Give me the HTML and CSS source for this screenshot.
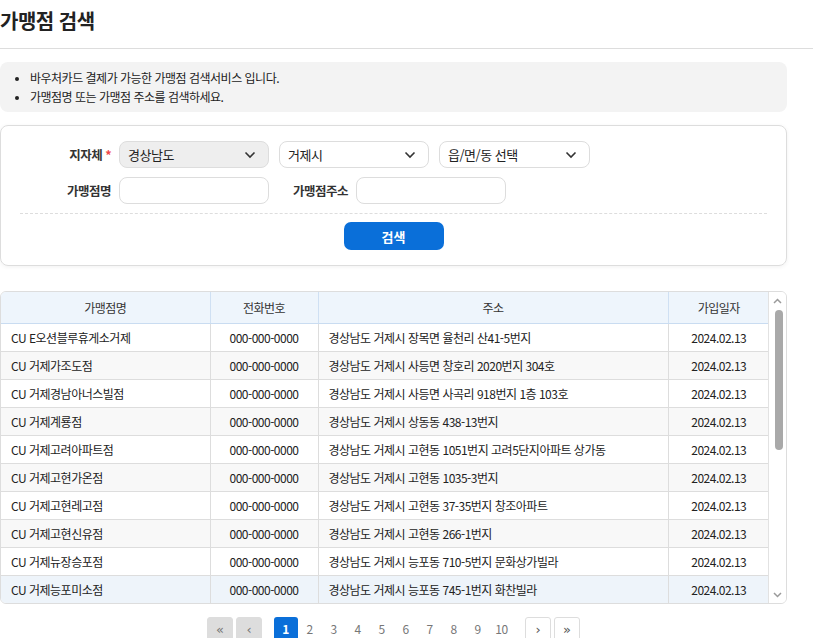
FILE: index.html
```html
<!DOCTYPE html>
<html lang="ko">
<head>
  <meta charset="UTF-8">
  <meta name="viewport" content="width=device-width, initial-scale=1.0">
  <title>가맹점 검색</title>
  <link rel="stylesheet" href="styles.css">
</head>
<body>
  <h1 class="page-title">가맹점 검색</h1>

  <div class="content">
    <ul class="info-box">
      <li>바우처카드 결제가 가능한 가맹점 검색서비스 입니다.</li>
      <li>가맹점명 또는 가맹점 주소를 검색하세요.</li>
    </ul>

    <div class="search-card">
      <div class="form-row">
        <label class="form-label">지자체<span class="required">*</span></label>
        <div class="select-box disabled">
          <span>경상남도</span>
          <svg width="12" height="8" viewBox="0 0 12 8"><path d="M1.5 1.5 6 6l4.5-4.5" fill="none" stroke="#333" stroke-width="1.6"/></svg>
        </div>
        <div class="select-box">
          <span>거제시</span>
          <svg width="12" height="8" viewBox="0 0 12 8"><path d="M1.5 1.5 6 6l4.5-4.5" fill="none" stroke="#333" stroke-width="1.6"/></svg>
        </div>
        <div class="select-box">
          <span>읍/면/동 선택</span>
          <svg width="12" height="8" viewBox="0 0 12 8"><path d="M1.5 1.5 6 6l4.5-4.5" fill="none" stroke="#333" stroke-width="1.6"/></svg>
        </div>
      </div>
      <div class="form-row">
        <label class="form-label">가맹점명</label>
        <input type="text" class="text-input">
        <label class="form-label inline">가맹점주소</label>
        <input type="text" class="text-input">
      </div>
      <div class="form-actions">
        <button class="search-button">검색</button>
      </div>
    </div>

    <div class="table-wrap">
      <div class="table-scroll">
        <table class="store-table">
          <colgroup>
            <col style="width: 209px">
            <col style="width: 108px">
            <col style="width: 350px">
            <col style="width: 101px">
          </colgroup>
          <thead>
            <tr>
              <th>가맹점명</th>
              <th>전화번호</th>
              <th>주소</th>
              <th>가입일자</th>
            </tr>
          </thead>
          <tbody id="store-list"></tbody>
        </table>
      </div>
      <div class="scrollbar">
        <span class="scroll-arrow">
          <svg width="9" height="6" viewBox="0 0 9 6"><path d="M1 5 4.5 1.5 8 5" fill="none" stroke="#9a9a9a" stroke-width="1.5"/></svg>
        </span>
        <div class="scroll-track">
          <div class="scroll-thumb"></div>
        </div>
        <span class="scroll-arrow">
          <svg width="9" height="6" viewBox="0 0 9 6"><path d="M1 1 4.5 4.5 8 1" fill="none" stroke="#9a9a9a" stroke-width="1.5"/></svg>
        </span>
      </div>
    </div>

    <div class="pagination">
      <button class="page-btn gray">&laquo;</button>
      <button class="page-btn gray">&lsaquo;</button>
      <div class="page-numbers">
        <span class="page-num active">1</span>
        <span class="page-num">2</span>
        <span class="page-num">3</span>
        <span class="page-num">4</span>
        <span class="page-num">5</span>
        <span class="page-num">6</span>
        <span class="page-num">7</span>
        <span class="page-num">8</span>
        <span class="page-num">9</span>
        <span class="page-num">10</span>
      </div>
      <button class="page-btn">&rsaquo;</button>
      <button class="page-btn">&raquo;</button>
    </div>
  </div>

  <script>
    const stores = [
      ['CU E오션블루휴게소거제', '경상남도 거제시 장목면 율천리 산41-5번지'],
      ['CU 거제가조도점', '경상남도 거제시 사등면 창호리 2020번지 304호'],
      ['CU 거제경남아너스빌점', '경상남도 거제시 사등면 사곡리 918번지 1층 103호'],
      ['CU 거제계룡점', '경상남도 거제시 상동동 438-13번지'],
      ['CU 거제고려아파트점', '경상남도 거제시 고현동 1051번지 고려5단지아파트 상가동'],
      ['CU 거제고현가온점', '경상남도 거제시 고현동 1035-3번지'],
      ['CU 거제고현레고점', '경상남도 거제시 고현동 37-35번지 창조아파트'],
      ['CU 거제고현신유점', '경상남도 거제시 고현동 266-1번지'],
      ['CU 거제뉴장승포점', '경상남도 거제시 능포동 710-5번지 문화상가빌라'],
      ['CU 거제능포미소점', '경상남도 거제시 능포동 745-1번지 화찬빌라'],
      ['CU 거제대우점', '경상남도 거제시 아주동 1423번지'],
      ['CU 거제동부점', '경상남도 거제시 동부면 산양리 501번지']
    ];

    const list = document.getElementById('store-list');
    stores.forEach((store, i) => {
      const tr = document.createElement('tr');
      if (i === 9) tr.className = 'hover';
      tr.innerHTML = `<td>${store[0]}</td><td class="center">000-000-0000</td><td>${store[1]}</td><td class="center">2024.02.13</td>`;
      list.appendChild(tr);
    });
  </script>
</body>
</html>
```

FILE: styles.css
```css
html {
  overflow: hidden;
}

body {
  margin: 0;
  font-family: "Noto Sans CJK KR", "Noto Sans", sans-serif;
  letter-spacing: -0.5px;
  color: #222;
  background-color: #fff;
}

.page-title {
  margin: 0;
  padding: 6px 0 12px;
  font-size: 20px;
  font-weight: bold;
  line-height: 30px;
  border-bottom: 1px solid #ddd;
}

.content {
  width: 787px;
  padding-top: 13px;
}

.info-box {
  margin: 0;
  padding: 6px 20px 6px 30px;
  background-color: #f3f3f3;
  border-radius: 8px;
  font-size: 12px;
  line-height: 19px;
  color: #222;
}

.info-box li::marker {
  font-size: 10px;
}

.search-card {
  margin-top: 13px;
  padding: 15px 19px;
  border: 1px solid #ddd;
  border-radius: 8px;
  box-shadow: 0 1px 4px rgba(0, 0, 0, 0.06);
}

.form-row {
  display: flex;
  align-items: center;
  margin-bottom: 9px;
}

.form-label {
  width: 91px;
  margin-right: 8px;
  text-align: right;
  font-size: 12.5px;
  font-weight: bold;
  color: #333;
}

.form-label.inline {
  width: auto;
  margin-left: 24px;
}

.required {
  color: #f04a4a;
  margin-left: 3px;
}

.select-box {
  display: flex;
  align-items: center;
  justify-content: space-between;
  box-sizing: border-box;
  width: 150px;
  height: 27px;
  margin-right: 10px;
  padding: 0 12px 0 8px;
  border: 1px solid #ddd;
  border-radius: 8px;
  background-color: #fff;
  font-size: 13px;
  color: #222;
  cursor: pointer;
}

.select-box.disabled {
  background-color: #eee;
}

.select-box:last-child {
  width: 151px;
}

.text-input {
  box-sizing: border-box;
  width: 150px;
  height: 27px;
  padding: 0 8px;
  border: 1px solid #ddd;
  border-radius: 8px;
  font-family: inherit;
  font-size: 13px;
}

.form-actions {
  display: flex;
  justify-content: center;
  border-top: 1px dashed #ddd;
  padding-top: 8px;
}

.search-button {
  width: 100px;
  height: 28px;
  border: none;
  border-radius: 7px;
  background-color: #0a6fd9;
  color: #fff;
  font-family: inherit;
  font-size: 13px;
  font-weight: bold;
  letter-spacing: 0;
  cursor: pointer;
}

.table-wrap {
  display: flex;
  margin-top: 25px;
  height: 311px;
  border: 1px solid #ddd;
  border-radius: 6px;
  overflow: hidden;
}

.table-scroll {
  flex: 1;
  overflow: hidden;
}

.scrollbar {
  display: flex;
  flex-direction: column;
  width: 17px;
  border-left: 1px solid #e2e2e2;
  background-color: #fff;
}

.scroll-arrow {
  display: flex;
  align-items: center;
  justify-content: center;
  height: 17px;
}

.scroll-track {
  flex: 1;
  padding: 1px 0 0 6px;
}

.scroll-thumb {
  width: 8px;
  height: 140px;
  border-radius: 4px;
  background-color: #a9a9a9;
}

.store-table {
  width: 768px;
  border-collapse: collapse;
  table-layout: fixed;
  font-size: 12px;
}

.store-table th {
  height: 31px;
  padding: 0;
  box-sizing: border-box;
  background-color: #eef5fc;
  border-right: 1px solid #cfe0f3;
  border-bottom: 1px solid #c9dcf1;
  font-weight: normal;
  color: #333;
}

.store-table th:last-child {
  border-right: none;
}

.store-table td {
  height: 28px;
  padding: 0 10px;
  box-sizing: border-box;
  border-right: 1px solid #ddd;
  border-bottom: 1px solid #ddd;
  white-space: nowrap;
  overflow: hidden;
  color: #222;
}

.store-table td:last-child {
  border-right: none;
}

.store-table td.center {
  text-align: center;
}

.store-table tbody tr:nth-child(even) td {
  background-color: #f8f8f8;
}

.store-table tbody tr.hover td {
  background-color: #eef4fa;
}

.pagination {
  display: flex;
  justify-content: center;
  align-items: flex-start;
  height: 21px;
  margin-top: 13px;
  overflow: hidden;
}

.page-btn {
  box-sizing: border-box;
  width: 26px;
  height: 28px;
  margin: 0 1.5px;
  padding: 0 0 4px;
  border: 1px solid #ddd;
  border-radius: 3px;
  background-color: #fff;
  font-family: "DejaVu Sans", sans-serif;
  font-size: 13px;
  color: #555;
  cursor: pointer;
}

.page-btn.gray {
  background-color: #ddd;
  color: #777;
}

.page-numbers {
  display: flex;
  margin: 0 10px;
}

.page-num {
  width: 24px;
  height: 28px;
  line-height: 24px;
  text-align: center;
  font-size: 12px;
  color: #777;
}

.page-num.active {
  background-color: #0a6fd9;
  border-radius: 3px 3px 0 0;
  color: #fff;
  font-weight: bold;
}
```
